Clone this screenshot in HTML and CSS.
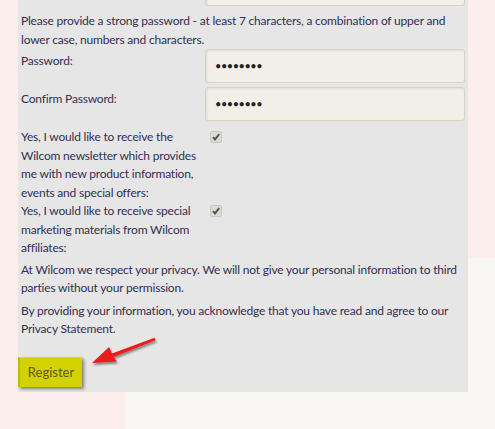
FILE: index.html
```html
<!DOCTYPE html>
<html>
<head>
<meta charset="utf-8">
<link rel="stylesheet" href="styles.css">
</head>
<body>
<div class="page">
  <form class="panel">
    <div class="row first">
      <div class="label"></div>
      <div class="field"><div class="input"></div></div>
    </div>
    <p class="note">Please provide a strong password - at least 7 characters, a combination of upper and lower case, numbers and characters.</p>
    <div class="row">
      <div class="label">Password:</div>
      <div class="field"><div class="input">••••••••</div></div>
    </div>
    <div class="row">
      <div class="label">Confirm Password:</div>
      <div class="field"><div class="input">••••••••</div></div>
    </div>
    <div class="row check-row">
      <div class="label">Yes, I would like to receive the Wilcom newsletter which provides me with new product information, events and special offers:</div>
      <div class="field"><span class="checkbox"><svg viewBox="0 0 12 12" width="12" height="12"><path d="M3 6.2 L5 8.4 L9.2 3.2" fill="none" stroke="#555" stroke-width="2"/></svg></span></div>
    </div>
    <div class="row check-row second">
      <div class="label">Yes, I would like to receive special marketing materials from Wilcom affiliates:</div>
      <div class="field"><span class="checkbox"><svg viewBox="0 0 12 12" width="12" height="12"><path d="M3 6.2 L5 8.4 L9.2 3.2" fill="none" stroke="#555" stroke-width="2"/></svg></span></div>
    </div>
    <p class="note privacy">At Wilcom we respect your privacy. We will not give your personal information to third parties without your permission.</p>
    <p class="note">By providing your information, you acknowledge that you have read and agree to our Privacy Statement.</p>
    <div class="actions"><button type="button" class="register">Register</button></div>
  </form>
  <svg class="arrow" viewBox="0 0 80 45" width="80" height="45">
    <defs>
      <filter id="sh" x="-20%" y="-20%" width="140%" height="160%">
        <feDropShadow dx="1" dy="2" stdDeviation="1.2" flood-color="#000" flood-opacity="0.45"/>
      </filter>
    </defs>
    <polygon filter="url(#sh)" fill="#ec1c1c" points="7,33 24,17 27,23.5 69.5,7.8 70.6,10.2 28.5,27 32,31.5"/>
  </svg>
</div>
</body>
</html>
```
FILE: styles.css
```css
html, body {
  margin: 0;
  padding: 0;
}
body {
  width: 495px;
  height: 429px;
  overflow: hidden;
  background-color: #f7f6f2;
  background-image:
    linear-gradient(#fdeeee, #fdeeee),
    linear-gradient(#fdeeee, #fdeeee);
  background-size: 125px 100%, 100% 258px;
  background-repeat: no-repeat;
  font-family: Lato, "Open Sans", sans-serif;
  font-size: 12px;
  letter-spacing: -0.2px;
  color: #352f52;
}
.page {
  position: relative;
  padding-left: 18px;
}
.panel {
  display: flow-root;
  width: 450px;
  background: #e6e6e6;
  padding: 0 0 5px 0;
  box-sizing: border-box;
}
.row {
  display: grid;
  grid-template-columns: 184px 260px;
  padding-left: 3px;
  margin-bottom: 4px;
}
.row.first {
  margin-top: -28px;
  margin-bottom: 6px;
}
.label {
  line-height: 18.5px;
  padding-top: 3px;
}
.input {
  height: 34px;
  box-sizing: border-box;
  background: #f1efe8;
  border: 1px solid #d9d4c2;
  border-radius: 3px;
  box-shadow: inset 1px 1px 2px rgba(0,0,0,0.08);
  padding-left: 9px;
  line-height: 32px;
  font-size: 11px;
  letter-spacing: -0.5px;
  color: #222;
}
.check-row .label {
  padding-top: 0;
  padding-right: 4px;
}
.check-row {
  margin-top: 7px;
  margin-bottom: 0;
}
.check-row.second {
  margin-top: 0;
}
.checkbox {
  display: block;
  width: 12px;
  height: 12px;
  margin: 3px 0 0 5px;
  background: #dcdcd6;
  border: 1px solid #c9c9bd;
  border-radius: 2px;
  box-sizing: border-box;
  overflow: hidden;
}
.checkbox svg {
  display: block;
  margin: -1px 0 0 -1px;
}
.note {
  margin: 4px 0 0 0;
  padding-left: 3px;
  line-height: 18.5px;
}
.first + .note {
  margin-top: 0;
}
.note.privacy {
  margin-top: 3px;
}
.actions {
  margin-top: 18px;
}
.register {
  display: block;
  width: 64px;
  height: 30px;
  background: #d2d200;
  border: 0;
  border-left: 2px solid #bcbc00;
  border-top: 1px solid #dede30;
  box-shadow: 2px 2px 3px rgba(0,0,0,0.45);
  font-family: Lato, "Open Sans", sans-serif;
  font-size: 13px;
  letter-spacing: 0;
  color: #5a5a1c;
  padding: 0;
  margin: 0;
}
.arrow {
  position: absolute;
  left: 85px;
  top: 330px;
}
```
